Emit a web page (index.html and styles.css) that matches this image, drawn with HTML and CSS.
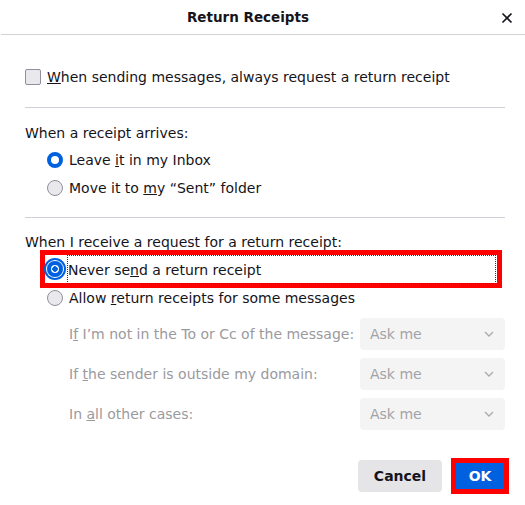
FILE: index.html
```html
<!DOCTYPE html>
<html>
<head>
<meta charset="utf-8">
<link rel="stylesheet" href="styles.css">
</head>
<body>
<div class="dialog">
  <div class="header">
    <div class="title">Return Receipts</div>
    <div class="close">
      <svg width="12" height="12" viewBox="0 0 12 12"><path d="M1.5 1.5 L10.5 10.5 M10.5 1.5 L1.5 10.5" stroke="#15141a" stroke-width="1.6" fill="none"/></svg>
    </div>
  </div>
  <div class="content">
    <div class="check-row">
      <span class="checkbox"></span>
      <span class="label"><u>W</u>hen sending messages, always request a return receipt</span>
    </div>
    <div class="sep"></div>
    <div class="group-label">When a receipt arrives:</div>
    <div class="radio-row">
      <span class="radio checked"></span>
      <span class="label">Leave <u>i</u>t in my Inbox</span>
    </div>
    <div class="radio-row">
      <span class="radio"></span>
      <span class="label">Move it to <u>m</u>y “Sent” folder</span>
    </div>
    <div class="sep sep2"></div>
    <div class="group-label">When I receive a request for a return receipt:</div>
    <div class="radio-row highlighted">
      <span class="radio checked focused"></span>
      <span class="label focus-label">Never se<u>n</u>d a return receipt</span>
    </div>
    <div class="radio-row second">
      <span class="radio"></span>
      <span class="label">Allow <u>r</u>eturn receipts for some messages</span>
    </div>
    <div class="sub-grid">
      <span class="sub-label">I<u>f</u> I’m not in the To or Cc of the message:</span>
      <div class="select"><span>Ask me</span><svg width="10" height="6" viewBox="0 0 10 6"><path d="M1 1 L5 5 L9 1" stroke="#aaaaaa" stroke-width="1.3" fill="none"/></svg></div>
      <span class="sub-label">If <u>t</u>he sender is outside my domain:</span>
      <div class="select"><span>Ask me</span><svg width="10" height="6" viewBox="0 0 10 6"><path d="M1 1 L5 5 L9 1" stroke="#aaaaaa" stroke-width="1.3" fill="none"/></svg></div>
      <span class="sub-label">In <u>a</u>ll other cases:</span>
      <div class="select"><span>Ask me</span><svg width="10" height="6" viewBox="0 0 10 6"><path d="M1 1 L5 5 L9 1" stroke="#aaaaaa" stroke-width="1.3" fill="none"/></svg></div>
    </div>
    <div class="buttons">
      <div class="btn cancel">Cancel</div>
      <div class="btn ok">OK</div>
    </div>
  </div>
</div>
</body>
</html>
```

FILE: styles.css
```css
html, body {
  margin: 0;
  padding: 0;
  background: #ffffff;
}
body {
  font-family: "DejaVu Sans", sans-serif;
  font-size: 14px;
  color: #15141a;
}
.dialog {
  width: 525px;
  height: 505px;
  display: flex;
  flex-direction: column;
}
.header {
  height: 34px;
  border-bottom: 1px solid #d3d3d6;
  margin-left: 1px;
  display: flex;
  align-items: center;
}
.title {
  flex: 1;
  text-align: center;
  font-weight: bold;
  font-size: 13.5px;
  padding-left: 3px;
}
.close {
  width: 30px;
  margin-right: 3px;
  display: flex;
  justify-content: center;
  align-items: center;
  padding-top: 2px;
}
.content {
  padding: 0 20px 0 25px;
  display: flex;
  flex-direction: column;
}
.check-row {
  margin-top: 32px;
  height: 20px;
  display: flex;
  align-items: center;
  gap: 6px;
}
.checkbox {
  width: 14px;
  height: 14px;
  border: 1px solid #8f8f9d;
  border-radius: 2px;
  background: #e9e9ed;
  flex: none;
}
.sep {
  margin-top: 20px;
  height: 1px;
  background: #cfcfd8;
}
.sep2 {
  margin-top: 15px;
}
.group-label {
  margin-top: 15px;
  height: 20px;
  line-height: 20px;
}
.sep2 + .group-label {
  margin-top: 14px;
}
.radio-row {
  margin-left: 22px;
  height: 28px;
  display: flex;
  align-items: center;
  gap: 6px;
}
.group-label + .radio-row {
  margin-top: 3px;
}
.radio {
  width: 14px;
  height: 14px;
  border-radius: 50%;
  border: 1px solid #8f8f9d;
  background: #e9e9ed;
  flex: none;
}
.radio.checked {
  width: 8px;
  height: 8px;
  border: 4px solid #0061e0;
  background: #ffffff;
}
.radio.focused {
  background: radial-gradient(circle, #0061e0 0 2.5px, #ffffff 3px);
  box-shadow: 0 0 0 1px #ffffff, 0 0 0 3px #0061e0;
}
.radio-row.highlighted {
  border: 5px solid #ff0000;
  margin: -2px 3px -5px 15px;
  padding-left: 2px;
}
.focus-label {
  flex: 1;
  align-self: stretch;
  display: flex;
  align-items: center;
  outline: 1px dotted #333333;
  margin: 1px 2px 0 -1px;
}
.radio-row.second {
  margin-top: 1px;
}
.sub-grid {
  margin-top: 6px;
  margin-left: 44px;
  display: grid;
  grid-template-columns: 1fr 145px;
  row-gap: 8px;
  align-items: center;
}
.sub-label {
  color: #9a9a9e;
}
.select {
  height: 32px;
  border-radius: 4px;
  background: #f4f4f5;
  display: flex;
  align-items: center;
  justify-content: space-between;
  padding: 0 11px 0 10px;
  color: #a3a3a7;
}
.buttons {
  margin-top: 28px;
  margin-right: -4px;
  display: flex;
  justify-content: flex-end;
  align-items: center;
  gap: 9px;
}
.btn {
  font-weight: bold;
  border-radius: 4px;
  display: flex;
  align-items: center;
  justify-content: center;
  box-sizing: border-box;
}
.cancel {
  width: 84px;
  height: 32px;
  background: #e5e5e8;
  color: #15141a;
}
.ok {
  width: 58px;
  height: 36px;
  background: #0061e0;
  color: #ffffff;
  border: 5px solid #ff0000;
  border-radius: 0;
}
```
